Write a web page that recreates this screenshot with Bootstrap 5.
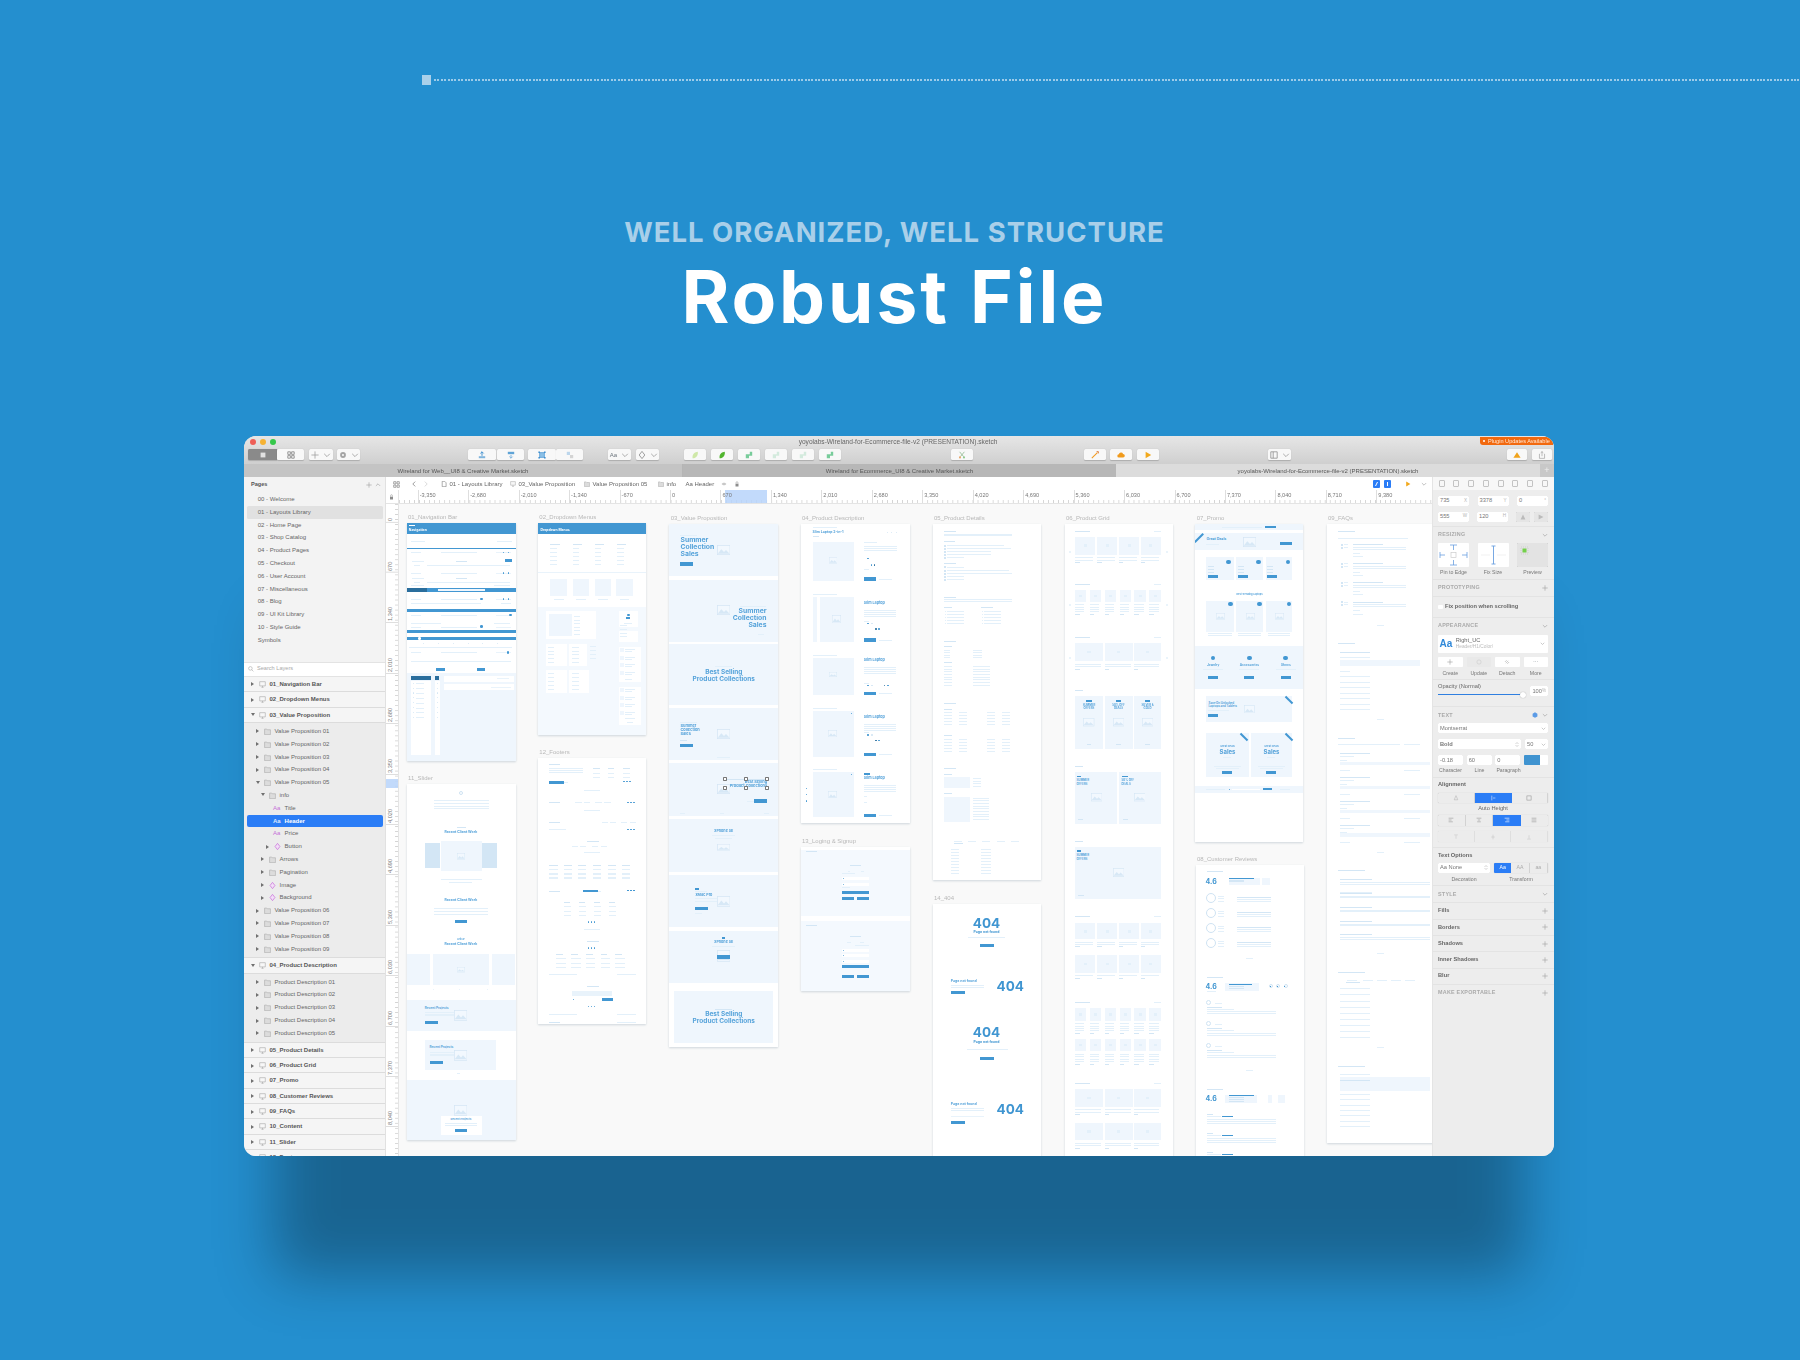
<!DOCTYPE html>
<html lang="en">
<head>
  <meta charset="UTF-8">
  <title>Robust File</title>
  <meta name="viewport" content="width=device-width, initial-scale=1">
  <link href="https://cdn.jsdelivr.net/npm/bootstrap@5.3.2/dist/css/bootstrap.min.css" rel="stylesheet">
  <style>
    body { background: #248fcf; width: 1800px; height: 1360px; overflow: hidden; font-family: "Liberation Sans", Arial, sans-serif; }

    /* hero */
    .hero-rule { margin-top: 75px; margin-left: 422px; height: 10px; }
    .hero-rule i { display: block; width: 9px; height: 10px; background: #a9d0ea; flex: none; }
    .hero-rule span { flex: 1; height: 2px; margin-left: 3px; background: repeating-linear-gradient(90deg, #9ccbe9 0 2px, transparent 2px 3.4px); }
    .hero-text { width: 1789px; text-align: center; font-family: Inter, "Open Sans", sans-serif; }
    .hero-sub { margin-top: 130px; height: 34px; line-height: 34px; font-size: 27.5px; font-weight: 700; color: #a9cfe9; letter-spacing: 1px; }
    .hero-title { margin-top: 3px; height: 90px; line-height: 90px; font-size: 73px; font-weight: 700; color: #fff; letter-spacing: 2.9px; }

    /* sketch window */
    .app-win { width: 1310px; height: 720px; margin: 94px 0 0 244px; border-radius: 12px; overflow: hidden; background: #ededed; box-shadow: 0 150px 55px -30px rgba(0, 0, 0, .3); color: #555; font-size: 6px; line-height: 1; }
    .app-win > * { filter: blur(.3px); }
    .app-head { height: 28px; background: linear-gradient(#e6e6e6, #cfcfcf); flex: none; }
    .title-row { height: 13px; font-size: 6.6px; color: #666; padding-right: 2px; }
    .lights i { display: block; width: 6px; height: 6px; border-radius: 50%; margin-right: 4.2px; }
    .lights { position: absolute; left: 6px; top: 3px; }
    .plugin-tag { position: absolute; right: 1px; top: 1px; width: 73px; height: 8px; background: #f2690f; color: #ffe9d8; font-size: 5.6px; line-height: 8px; border-radius: 0 6px 0 3px; padding-left: 8px; }
    .plugin-tag::before { content: ""; position: absolute; left: 3px; top: 3px; width: 2px; height: 2px; background: #fff; border-radius: 50%; }
    .tool-row { height: 11px; padding-left: 4px; }
    .tbtn { height: 11px; width: 22px; background: #f8f8f8; border-radius: 1.5px; box-shadow: 0 .5px 1px rgba(0,0,0,.18); flex: none; }
    .tbtn svg { width: 8px; height: 8px; }
    .w-dark { width: 29px; background: #8a8a8a; border-radius: 1.5px 0 0 1.5px; }
    .w27 { width: 27px; } .w28 { width: 28px; } .w24 { width: 24px; } .w23 { width: 23px; } .w20 { width: 20px; }
    .ml1 { margin-left: 1px; } .ml4 { margin-left: 4px; } .ml5 { margin-left: 5px; } .ml25 { margin-left: 25px; } .ml108 { margin-left: 108px; } .ml110 { margin-left: 110px; } .ml111 { margin-left: 111px; } .ml109 { margin-left: 109px; } .ml216 { margin-left: 216px; }
    .tab-row { height: 13px; flex: none; background: #c4c4c4; font-size: 6px; color: #555; }
    .tab-a { width: 439px; border-right: 1px solid #b5b5b5; }
    .tab-b { width: 433px; background: #b7b7b7; }
    .tab-c { width: 424px; background: #dcdcdc; }
    .tab-add { width: 14px; background: #c8c8c8; color: #eee; font-size: 9px; }

    /* layers */
    .side-pane { width: 141.5px; flex: none; background: #f3f3f3; border-right: 1px solid #e1e1e1; }
    .pages-head { height: 16px; padding: 0 4px 0 7px; font-weight: 700; color: #555; font-size: 5.6px; }
    .pages-head svg { width: 6px; height: 6px; margin-left: 3px; }
    .page-item { height: 12.8px; line-height: 12.8px; margin: 0 2px 0 3px; padding-left: 10.7px; color: #666; }
    .page-item.is-on { background: #e1e1e1; border-radius: 1.5px; }
    .pages-pad { height: 15px; }
    .layer-search { height: 15.4px; background: #fff; padding-left: 4px; border-top: 1px solid #e3e3e3; border-bottom: 1px solid #e3e3e3; color: #aaa; font-size: 5.6px; }
    .layer-search svg { width: 6px; height: 6px; margin-right: 3px; }
    .layer-group { height: 15.35px; background: #f5f5f5; border-bottom: 1px solid #dcdcdc; font-weight: 700; color: #555; position: relative; padding-left: 25.5px; line-height: 14.5px; }
    .layer-kids { background: #ececec; padding: 2px 0; border-bottom: 1px solid #dcdcdc; }
    .layer-row { height: 12.8px; position: relative; line-height: 12.8px; color: #666; }
    .layer-row.is-on { color: #fff; font-weight: 700; background: #2b7df6; margin: 0 2px 0 3px; border-radius: 2px; }
    .layer-row span, .layer-row svg, .layer-row b, .layer-group svg, .layer-group b { position: absolute; }
    .arr-r { width: 0; height: 0; border-left: 3px solid #707070; border-top: 2px solid transparent; border-bottom: 2px solid transparent; }
    .arr-d { width: 0; height: 0; border-top: 3px solid #707070; border-left: 2px solid transparent; border-right: 2px solid transparent; }
    .lay-ico { width: 7px; height: 7px; }

    /* middle */
    .mid-pane { width: 1046px; min-width: 0; }
    .crumb-row { height: 13px; background: #fff; flex: none; color: #666; position: relative; }
    .crumb-row span, .crumb-row svg { position: absolute; top: 3.5px; }
    .crumb-row svg { width: 6px; height: 6px; }
    .ruler-row { height: 14px; flex: none; background: #fff; }
    .ruler-lock { width: 13px; flex: none; background: #fff; border-right: 1px solid #e4e4e4; border-bottom: 1px solid #e4e4e4; }
    .ruler-lock svg { width: 5px; height: 6px; }
    .ruler-h { flex: 1; position: relative; overflow: hidden; border-bottom: 1px solid #e4e4e4; background: linear-gradient(90deg, #d3d3d3 1px, transparent 1px) 0 100% / 5.045px 3px repeat-x #fff; }
    .ruler-v { width: 13px; flex: none; position: relative; overflow: hidden; border-right: 1px solid #e4e4e4; background: linear-gradient(#d3d3d3 1px, transparent 1px) 100% 0 / 3px 5.04px repeat-y #fff; }
    .ruler-h em { position: absolute; top: 0; height: 14px; border-left: 1px solid #dedede; padding: 3px 0 0 1px; font-style: normal; color: #777; font-size: 5.6px; }
    .ruler-v em { position: absolute; left: 0; width: 12px; border-bottom: 1px solid #dedede; font-style: normal; color: #777; font-size: 5.6px; transform: translateY(-100%); }
    .ruler-v em b { display: block; font-weight: 400; writing-mode: vertical-rl; transform: rotate(180deg); margin-left: 2px; padding-top: 1px; }
    .ruler-mark-h { position: absolute; left: 326px; top: 0; width: 42px; height: 14px; background: #b7d3fa; opacity: .85; }
    .ruler-mark-v { position: absolute; left: 0; top: 275px; width: 12px; height: 9px; background: #b7d3fa; opacity: .85; }
    .sk-canvas { position: relative; flex: 1; overflow: hidden; background: #f9f9f9; }

    /* wireframe boards */
    .wf-label { position: absolute; color: #b8b8b8; font-size: 6px; white-space: nowrap; }
    .wf-board { position: absolute; background: #fff; box-shadow: 0 .5px 2px rgba(60, 90, 120, .22); overflow: hidden; }
    .wf-board > * { position: absolute; }
    .wf-pale { background: #eff6fd; }
    .wf-pale2 { background: #f4f9fe; }
    .wf-mid { background: #d3e6f5; }
    .wf-line { background: #e3f0fa; }
    .wf-soft { background: #e9f3fb; }
    .wf-blue { background: #4297d2; }
    .wf-dark { background: #2a6e9d; }
    .wf-white { background: #fff; }
    .wf-round { border-radius: 50%; }
    .wf-ring { border-radius: 50%; border: .7px solid #cfe3f3; }
    .wf-grip { background: #fff; border: .5px solid #777; border-radius: .7px; }
    .wf-txt { color: #56a3da; font-family: Inter, "Open Sans", sans-serif; font-weight: 700; line-height: 1; white-space: nowrap; }
    .wf-ink { color: #3f95d1; }
    .wf-w { color: #fff; }

    /* inspector */
    .insp-pane { width: 122.5px; flex: none; background: #ededed; border-left: 1px solid #e4e4e4; color: #666; font-size: 5.7px; }
    .insp-top { height: 13px; background: #f7f7f7; padding: 0 6px; }
    .insp-top i { display: block; width: 6px; height: 7px; border: .6px solid #c3c3c3; border-radius: 1px; }
    .insp-sec { padding: 0 6px 0 5.5px; border-bottom: 1px solid #e3e3e3; }
    .insp-head { height: 16px; color: #aaa; font-size: 5.4px; font-weight: 700; letter-spacing: .25px; }
    .insp-head svg, .insp-fill svg { width: 6px; height: 6px; }
    .insp-fill { height: 16.3px; font-weight: 700; color: #666; border-bottom: 1px solid #e3e3e3; padding: 0 6px 0 5.5px; }
    .fld { height: 10px; background: #fff; border-radius: 1px; padding: 0 2px; box-shadow: 0 0 .5px rgba(0,0,0,.25); color: #777; }
    .fld u { text-decoration: none; color: #b5b5b5; font-size: 4.6px; }
    .w31 { width: 31px; } .w25 { width: 25px; } .gap-8 { gap: 9px; } .gap-4 { gap: 4px; }
    .pos-rows { padding-top: 6px; height: 37px; }
    .pos-rows > div + div { margin-top: 5.7px; }
    .mini-btn { width: 14px; height: 10px; background: #e5e5e5; border-radius: 1px; box-shadow: 0 0 .5px rgba(0,0,0,.3); }
    .mini-btn svg { width: 6px; height: 6px; }
    .res-box { width: 31px; height: 24px; background: #fff; border-radius: 1px; }
    .res-box.is-prev { background: #e3e3e3; box-shadow: inset 0 0 .5px rgba(0,0,0,.4); }
    .res-box svg { width: 100%; height: 100%; display: block; }
    .cap-row { height: 10px; color: #777; font-size: 5.2px; text-align: center; }
    .fix-row { height: 20px; color: #666; font-weight: 700; }
    .fix-row i { display: block; width: 4.5px; height: 4.5px; background: #fff; margin-right: 2.5px; border-radius: 1px; }
    .style-box { height: 18.6px; background: #fff; padding: 0 3px 0 1.5px; border-radius: 1px; margin-top: .5px; }
    .style-aa { font-size: 10px; font-weight: 700; color: #2f88d9; margin-right: 3.5px; }
    .style-box p { margin: 0; line-height: 1.25; color: #666; }
    .style-box p + p { color: #bbb; font-size: 4.8px; }
    .act-btn { width: 25px; height: 10px; background: #fff; border-radius: 1px; margin-right: 4px; }
    .act-btn:last-child { margin-right: 0; }
    .act-btn svg { width: 6px; height: 6px; }
    .op-sec { height: 27px; padding-top: 4px; }
    .op-bar { height: 1px; width: 86px; margin-top: 2px; background: #2f7fe0; position: relative; }
    .op-bar i { position: absolute; right: -2px; top: -2.5px; width: 6px; height: 6px; border-radius: 50%; background: #fff; box-shadow: 0 0 1px rgba(0,0,0,.4); }
    .op-pct { width: 18px; height: 10px; margin-top: 2px; }
    .txt-rows > div { margin-bottom: 6px; }
    .color-well { width: 24px; height: 10px; border-radius: 1px; overflow: hidden; }
    .color-well i { display: block; width: 16px; background: #3f93d0; }
    .color-well b { display: block; flex: 1; background: #fff; }
    .lbl-strong { font-weight: 700; color: #666; height: 15px; }
    .seg-bar { height: 10.6px; background: #ececec; box-shadow: 0 0 .7px rgba(0,0,0,.4); border-radius: 1px; overflow: hidden; }
    .seg-bar > div { flex: 1; height: 100%; border-right: .5px solid #d2d2d2; }
    .seg-bar > div.on { background: #2b7df6; border: 0; }
    .seg-bar svg { width: 6px; height: 6px; }
    .seg-3a > div:nth-child(2) { flex: 0 0 37px; }
    .seg-4a > div { flex: 0 0 27.7px; }
    .seg-off { opacity: .55; }
    .aa-tab { font-size: 5.2px; color: #aaa; }
    .aa-tab.on { color: #fff; }
    .cap-line { height: 12px; }
  </style>
</head>
<body>

  <svg width="0" height="0" class="position-absolute">
    <symbol id="i-chev" viewBox="0 0 10 10"><path d="M1.5 3.5 5 7l3.5-3.5" fill="none" stroke="#a8a8a8" stroke-width="1.2"/></symbol>
    <symbol id="i-plus" viewBox="0 0 10 10"><path d="M5 .5v9M.5 5h9" fill="none" stroke="#a0a0a0" stroke-width="1"/></symbol>
    <symbol id="i-folder" viewBox="0 0 10 10"><path d="M.8 1.5h3l1 1h4.4v7H.8z" fill="#dcdcdc" stroke="#a9a9a9" stroke-width=".8"/></symbol>
    <symbol id="i-monitor" viewBox="0 0 10 10"><path d="M1 1h8v6H1zM3.5 9h3M5 7v2" fill="#f7f7f7" stroke="#a0a0a0" stroke-width=".8"/></symbol>
    <symbol id="i-diamond" viewBox="0 0 10 10"><path d="M5 .5 8.5 5 5 9.5 1.5 5z" fill="#f3def8" stroke="#c56fd8" stroke-width="1"/></symbol>
    <symbol id="i-grid" viewBox="0 0 10 10"><path d="M1 1h3.2v3.2H1zM5.8 1H9v3.2H5.8zM1 5.8h3.2V9H1zM5.8 5.8H9V9H5.8z" fill="none" stroke="#777" stroke-width=".9"/></symbol>
    <symbol id="i-lock" viewBox="0 0 10 12"><path d="M2 5.5h6v5.5H2z" fill="#8c8c8c"/><path d="M3.2 5.5V3.2a1.8 1.8 0 0 1 3.6 0v2.3" fill="none" stroke="#8c8c8c" stroke-width="1"/></symbol>
    <symbol id="i-tray" viewBox="0 0 10 10"><path d="M5 1v5M3 3l2-2 2 2" fill="none" stroke="#3f8fcf" stroke-width="1.2"/><path d="M1 6.5h8V9H1z" fill="#7fb4dc"/></symbol>
    <symbol id="i-tray2" viewBox="0 0 10 10"><path d="M1 1h8v3H1z" fill="#5fa3d6"/><path d="M5 9V5M3 7l2 2 2-2" fill="none" stroke="#7fb4dc" stroke-width="1.2"/></symbol>
    <symbol id="i-group" viewBox="0 0 10 10"><path d="M2 2h6v6H2z" fill="#8cc0e6" stroke="#3f8fcf" stroke-width=".8"/><path d="M.5.5h2v2h-2zM7.5.5h2v2h-2zM.5 7.5h2v2h-2zM7.5 7.5h2v2h-2z" fill="#3f8fcf"/></symbol>
    <symbol id="i-ungroup" viewBox="0 0 10 10"><path d="M1 1h4v4H1z" fill="#bcd6ec"/><path d="M5 5h4v4H5z" fill="#d4d4d4"/></symbol>
    <symbol id="i-leaf" viewBox="0 0 10 10"><path d="M2 9C1 4 5 1 8.500.8 9 5 7 9 2 9z" fill="#52b52f"/></symbol>
    <symbol id="i-leaf2" viewBox="0 0 10 10"><path d="M2 9C1 4 5 1 8.500.8 9 5 7 9 2 9z" fill="#cfe8a8"/></symbol>
    <symbol id="i-union" viewBox="0 0 10 10"><path d="M1 4h5V1h3v5H5v3H1z" fill="#78cc9a"/></symbol>
    <symbol id="i-union2" viewBox="0 0 10 10"><path d="M1 4h5V1h3v5H5v3H1z" fill="#d3eadd"/></symbol>
    <symbol id="i-pen" viewBox="0 0 10 10"><path d="M1 9 8 2" stroke="#f29a1f" stroke-width="1.3" fill="none"/><path d="M7 .8h2.200V3" fill="none" stroke="#d8641c"/></symbol>
    <symbol id="i-cloud" viewBox="0 0 10 10"><path d="M2.500 8A2 2 0 0 1 2.300 4 2.800 2.800 0 0 1 7.600 3.600 2.200 2.200 0 0 1 7.500 8z" fill="#f09a1c"/></symbol>
    <symbol id="i-play" viewBox="0 0 10 10"><path d="M2 1l7 4-7 4z" fill="#f2a91d"/></symbol>
    <symbol id="i-warn" viewBox="0 0 10 10"><path d="M5 1.500 9.500 8.500H.5z" fill="#f0a31c"/></symbol>
    <symbol id="i-share" viewBox="0 0 10 10"><path d="M2.500 4H1.800v5.200h6.400V4H7.500M5 6.500V.8M3.400 2.200 5 .8l1.600 1.400" fill="none" stroke="#9a9a9a" stroke-width=".8"/></symbol>
    <symbol id="i-layout" viewBox="0 0 10 10"><path d="M1 1h8v8H1zM4 1v8" fill="none" stroke="#8f8f8f" stroke-width="1"/></symbol>
    <symbol id="i-gear" viewBox="0 0 10 10"><circle cx="5" cy="5" r="3.600" fill="#a4a4a4"/><circle cx="5" cy="5" r="1.300" fill="#f7f7f7"/></symbol>
    <symbol id="i-scissor" viewBox="0 0 10 10"><path d="M2 1l5 6M8 1 3 7" stroke="#8fb98f" stroke-width="1" fill="none"/><circle cx="2.500" cy="8" r="1.300" fill="#e7a66a"/><circle cx="7.500" cy="8" r="1.300" fill="#8fca8f"/></symbol>
  </svg>

  <div class="hero-rule d-flex align-items-center"><i></i><span></span></div>

  <div class="hero-text">
    <div class="hero-sub">WELL ORGANIZED, WELL STRUCTURE</div>
    <div class="hero-title">Robust File</div>
  </div>

  <div class="app-win d-flex flex-column">
    <div class="app-head position-relative">
      <div class="lights d-flex"><i style="background:#ee5f57"></i><i style="background:#f6b233"></i><i style="background:#35c84a"></i></div>
      <div class="title-row d-flex align-items-center justify-content-center">yoyolabs-Wireland-for-Ecommerce-file-v2 (PRESENTATION).sketch</div>
      <div class="plugin-tag">Plugin Updates Available</div>
      <div class="tool-row d-flex align-items-center">
        <div class="tbtn w-dark d-flex align-items-center justify-content-center"><svg viewBox="0 0 10 10"><path d="M2 2h6v6H2z" fill="#e2e2e2"/></svg></div>
        <div class="tbtn w27 d-flex align-items-center justify-content-center"><svg><use href="#i-grid"/></svg></div>
        <div class="tbtn w24 ml5 d-flex align-items-center justify-content-center gap-1"><svg><use href="#i-plus"/></svg><svg class="chev-s"><use href="#i-chev"/></svg></div>
        <div class="tbtn w23 ml4 d-flex align-items-center justify-content-center gap-1"><svg><use href="#i-gear"/></svg><svg><use href="#i-chev"/></svg></div>
        <div class="tbtn w28 ml108 d-flex align-items-center justify-content-center"><svg><use href="#i-tray"/></svg></div>
        <div class="tbtn w27 ml1 d-flex align-items-center justify-content-center"><svg><use href="#i-tray2"/></svg></div>
        <div class="tbtn w28 ml4 d-flex align-items-center justify-content-center"><svg><use href="#i-group"/></svg></div>
        <div class="tbtn w27 d-flex align-items-center justify-content-center"><svg><use href="#i-ungroup"/></svg></div>
        <div class="tbtn w23 ml25 d-flex align-items-center justify-content-center gap-1 text-secondary">Aa<svg><use href="#i-chev"/></svg></div>
        <div class="tbtn w23 ml5 d-flex align-items-center justify-content-center gap-1"><svg viewBox="0 0 10 10"><path d="M5 .5 8.500 5 5 9.500 1.500 5z" fill="none" stroke="#888"/></svg><svg><use href="#i-chev"/></svg></div>
        <div class="tbtn ml25 d-flex align-items-center justify-content-center"><svg><use href="#i-leaf2"/></svg></div>
        <div class="tbtn ml5 d-flex align-items-center justify-content-center"><svg><use href="#i-leaf"/></svg></div>
        <div class="tbtn ml5 d-flex align-items-center justify-content-center"><svg><use href="#i-union"/></svg></div>
        <div class="tbtn ml5 d-flex align-items-center justify-content-center"><svg><use href="#i-union2"/></svg></div>
        <div class="tbtn ml5 d-flex align-items-center justify-content-center"><svg><use href="#i-union2"/></svg></div>
        <div class="tbtn ml5 d-flex align-items-center justify-content-center"><svg><use href="#i-union"/></svg></div>
        <div class="tbtn ml110 d-flex align-items-center justify-content-center"><svg><use href="#i-scissor"/></svg></div>
        <div class="tbtn ml111 d-flex align-items-center justify-content-center"><svg><use href="#i-pen"/></svg></div>
        <div class="tbtn ml4 d-flex align-items-center justify-content-center"><svg><use href="#i-cloud"/></svg></div>
        <div class="tbtn ml5 d-flex align-items-center justify-content-center"><svg><use href="#i-play"/></svg></div>
        <div class="tbtn w23 ml109 d-flex align-items-center justify-content-center gap-1"><svg><use href="#i-layout"/></svg><svg><use href="#i-chev"/></svg></div>
        <div class="tbtn w20 ml216 d-flex align-items-center justify-content-center"><svg><use href="#i-warn"/></svg></div>
        <div class="tbtn w20 ml5 d-flex align-items-center justify-content-center"><svg><use href="#i-share"/></svg></div>
      </div>
    </div>

    <div class="tab-row d-flex align-items-center">
      <div class="tab-a h-100 d-flex align-items-center justify-content-center">Wireland for Web__UI8 &amp; Creative Market.sketch</div>
      <div class="tab-b h-100 d-flex align-items-center justify-content-center">Wireland for Ecommerce_UI8 &amp; Creative Market.sketch</div>
      <div class="tab-c h-100 d-flex align-items-center justify-content-center">yoyolabs-Wireland-for-Ecommerce-file-v2 (PRESENTATION).sketch</div>
      <div class="tab-add h-100 d-flex align-items-center justify-content-center">+</div>
    </div>

    <div class="d-flex flex-grow-1 overflow-hidden">
      <!-- pages + layers -->
      <div class="side-pane overflow-hidden">
        <div class="pages-head d-flex align-items-center justify-content-between">Pages<span class="d-flex"><svg><use href="#i-plus"/></svg><svg style="transform:scaleY(-1)"><use href="#i-chev"/></svg></span></div>
        <div id="page-list"></div>
        <div class="pages-pad"></div>
        <div class="layer-search d-flex align-items-center"><svg viewBox="0 0 10 10"><circle cx="4" cy="4" r="3" fill="none" stroke="#aaa"/><path d="M6 6l3 3" stroke="#aaa"/></svg>Search Layers</div>
        <div id="layer-list"></div>
      </div>

      <!-- breadcrumb, rulers, canvas -->
      <div class="mid-pane d-flex flex-column">
        <div class="crumb-row">
          <svg style="left:7px;width:7px;height:7px"><use href="#i-grid"/></svg>
          <svg style="left:25px" viewBox="0 0 10 10"><path d="M7 1 3 5l4 4" fill="none" stroke="#777" stroke-width="1.200"/></svg>
          <svg style="left:37px" viewBox="0 0 10 10"><path d="M3 1l4 4-4 4" fill="none" stroke="#ccc" stroke-width="1.200"/></svg>
          <svg style="left:55px" viewBox="0 0 10 10"><path d="M2 .5h4L8.500 3v6.500H2z" fill="#fff" stroke="#777"/></svg><span style="left:64px">01 - Layouts Library</span>
          <svg style="left:124px"><use href="#i-monitor"/></svg><span style="left:133px">03_Value Proposition</span>
          <svg style="left:198px"><use href="#i-folder"/></svg><span style="left:207px">Value Proposition 05</span>
          <svg style="left:272px"><use href="#i-folder"/></svg><span style="left:281px">info</span>
          <span style="left:300px;color:#666">Aa</span><span style="left:309px">Header</span>
          <svg style="left:335px" viewBox="0 0 10 10"><path d="M1 5c2-3 6-3 8 0-2 3-6 3-8 0z" fill="#c8c8c8"/></svg>
          <svg style="left:348px"><use href="#i-lock"/></svg>
          <svg style="left:987px;width:7px;height:8px;top:2.500px" viewBox="0 0 7 8"><rect width="7" height="8" rx="1" fill="#2b7df6"/><path d="M2.500 6 4.500 2" stroke="#fff"/></svg>
          <svg style="left:998px;width:7px;height:8px;top:2.500px" viewBox="0 0 7 8"><rect width="7" height="8" rx="1" fill="#2b7df6"/><path d="M3.500 2v4" stroke="#fff"/></svg>
          <svg style="left:1019px"><use href="#i-play"/></svg>
          <svg style="left:1035px"><use href="#i-chev"/></svg>
        </div>
        <div class="ruler-row d-flex">
          <div class="ruler-lock d-flex align-items-center justify-content-center"><svg viewBox="0 0 10 12"><use href="#i-lock"/></svg></div>
          <div class="ruler-h" id="ruler-h"><div class="ruler-mark-h"></div></div>
        </div>
        <div class="d-flex flex-grow-1 overflow-hidden">
          <div class="ruler-v" id="ruler-v"><div class="ruler-mark-v"></div></div>
          <div class="sk-canvas" id="sk-canvas"></div>
        </div>
      </div>

      <!-- inspector -->
      <div class="insp-pane d-flex flex-column">
        <div class="insp-top d-flex align-items-center justify-content-between"><i></i><i></i><i></i><i></i><i></i><i></i><i></i><i></i></div>

        <div class="insp-sec pos-rows">
          <div class="d-flex justify-content-between">
            <div class="fld w31 d-flex align-items-center justify-content-between">735<u>X</u></div>
            <div class="fld w31 d-flex align-items-center justify-content-between">3378<u>Y</u></div>
            <div class="fld w31 d-flex align-items-center justify-content-between">0<u>°</u></div>
          </div>
          <div class="d-flex justify-content-between">
            <div class="fld w31 d-flex align-items-center justify-content-between">555<u>W</u></div>
            <div class="fld w31 d-flex align-items-center justify-content-between">120<u>H</u></div>
            <div class="d-flex gap-1">
              <div class="mini-btn d-flex align-items-center justify-content-center"><svg viewBox="0 0 10 10"><path d="M5 1 9 9H1z" fill="#bbb"/></svg></div>
              <div class="mini-btn d-flex align-items-center justify-content-center"><svg viewBox="0 0 10 10"><path d="M1 1l8 4-8 4z" fill="#bbb"/></svg></div>
            </div>
          </div>
        </div>

        <div class="insp-sec">
          <div class="insp-head d-flex align-items-center justify-content-between">RESIZING<svg><use href="#i-chev"/></svg></div>
          <div class="d-flex justify-content-between">
            <div class="res-box"><svg viewBox="0 0 31 24"><path d="M15.500 2v5M12 2h7M15.500 22v-5M12 22h7M2 12h5M2 9v6M29 12h-5M29 9v6" fill="none" stroke="#6a9fe0" stroke-width=".8"/><rect x="13" y="9.500" width="5" height="5" fill="none" stroke="#ccc" stroke-width=".7"/></svg></div>
            <div class="res-box"><svg viewBox="0 0 31 24"><path d="M15.500 3v18M13.500 3h4M13.500 21h4" fill="none" stroke="#6a9fe0" stroke-width=".9"/><path d="M3 12h9M19 12h9" stroke="#e8e8e8" stroke-width=".6"/></svg></div>
            <div class="res-box is-prev"><svg viewBox="0 0 31 24"><rect x="4" y="4" width="7" height="7" fill="none" stroke="#bbb" stroke-width=".5" stroke-dasharray="1"/><rect x="5.500" y="5.500" width="4" height="4" fill="#74d04b"/></svg></div>
          </div>
          <div class="cap-row d-flex justify-content-between align-items-center" style="height:12px"><span class="w31">Pin to Edge</span><span class="w31">Fix Size</span><span class="w31">Preview</span></div>
        </div>

        <div class="insp-sec"><div class="insp-head d-flex align-items-center justify-content-between">PROTOTYPING<svg><use href="#i-plus"/></svg></div></div>
        <div class="insp-sec"><div class="fix-row d-flex align-items-center"><i></i>Fix position when scrolling</div></div>

        <div class="insp-sec">
          <div class="insp-head d-flex align-items-center justify-content-between">APPEARANCE<svg><use href="#i-chev"/></svg></div>
          <div class="style-box d-flex align-items-center">
            <span class="style-aa">Aa</span>
            <div class="flex-grow-1"><p>Right_UC</p><p>Header/H1/Color/</p></div>
            <svg width="5" height="5"><use href="#i-chev"/></svg>
          </div>
          <div class="d-flex mt-1 justify-content-between">
            <div class="act-btn d-flex align-items-center justify-content-center"><svg><use href="#i-plus"/></svg></div>
            <div class="act-btn d-flex align-items-center justify-content-center" style="background:#e9e9e9"><svg viewBox="0 0 10 10"><circle cx="5" cy="5" r="3.500" fill="none" stroke="#ccc"/></svg></div>
            <div class="act-btn d-flex align-items-center justify-content-center"><svg viewBox="0 0 10 10"><path d="M3 7l4-4M1.500 5l3-3M5.500 8l3-3" fill="none" stroke="#aaa"/></svg></div>
            <div class="act-btn d-flex align-items-center justify-content-center text-secondary">···</div>
          </div>
          <div class="cap-row d-flex align-items-center" style="height:12.300px"><span class="w25 me-1">Create</span><span class="w25 me-1">Update</span><span class="w25 me-1">Detach</span><span class="w25">More</span></div>
        </div>

        <div class="insp-sec op-sec d-flex justify-content-between">
          <div><div style="height:8px">Opacity (Normal)</div><div class="op-bar"><i></i></div></div>
          <div class="fld op-pct d-flex align-items-center justify-content-end">100<u>%</u></div>
        </div>

        <div class="insp-sec">
          <div class="insp-head d-flex align-items-center justify-content-between">TEXT<span class="d-flex gap-1"><svg viewBox="0 0 10 10"><path d="M5 .5 9 3v4.500L5 9.500 1 7.500V3z" fill="#5b9be6"/></svg><svg><use href="#i-chev"/></svg></span></div>
          <div class="txt-rows">
            <div class="fld d-flex align-items-center justify-content-between">Montserrat<svg width="5" height="5"><use href="#i-chev"/></svg></div>
            <div class="d-flex justify-content-between">
              <div class="fld d-flex align-items-center justify-content-between fw-bold" style="width:83px">Bold<svg width="4" height="5" viewBox="0 0 4 5"><path d="M.5 2 2 .5 3.500 2M.5 3 2 4.500 3.500 3" fill="none" stroke="#aaa" stroke-width=".5"/></svg></div>
              <div class="fld w23 d-flex align-items-center justify-content-between">50<svg width="5" height="5"><use href="#i-chev"/></svg></div>
            </div>
            <div class="d-flex justify-content-between mb-0">
              <div class="fld w25 d-flex align-items-center">-0.18</div>
              <div class="fld w25 d-flex align-items-center">60</div>
              <div class="fld w25 d-flex align-items-center">0</div>
              <div class="color-well d-flex"><i></i><b></b></div>
            </div>
          </div>
          <div class="cap-row d-flex align-items-center" style="height:11.200px"><span class="w25 me-1">Character</span><span class="w25 me-1">Line</span><span class="w25">Paragraph</span></div>
        </div>

        <div class="insp-sec">
          <div class="lbl-strong d-flex align-items-center">Alignment</div>
          <div class="seg-bar seg-3a d-flex">
            <div class="d-flex align-items-center justify-content-center"><svg viewBox="0 0 10 10"><path d="M5 1 2 8h6z" fill="none" stroke="#aaa" stroke-width=".8"/></svg></div>
            <div class="on d-flex align-items-center justify-content-center"><svg viewBox="0 0 10 10"><path d="M3 1v8M5 5h4" stroke="#dfeaff"/></svg></div>
            <div class="d-flex align-items-center justify-content-center"><svg viewBox="0 0 10 10"><rect x="1.500" y="1.500" width="7" height="7" fill="none" stroke="#999"/></svg></div>
          </div>
          <div class="cap-line d-flex align-items-center justify-content-center">Auto Height</div>
          <div class="seg-bar seg-4a d-flex">
            <div class="d-flex align-items-center justify-content-center"><svg viewBox="0 0 10 10"><path d="M1 2h8M1 5h5M1 8h7" stroke="#999"/></svg></div>
            <div class="d-flex align-items-center justify-content-center"><svg viewBox="0 0 10 10"><path d="M1 2h8M3 5h4M2 8h6" stroke="#999"/></svg></div>
            <div class="on d-flex align-items-center justify-content-center"><svg viewBox="0 0 10 10"><path d="M1 2h8M4 5h5M2 8h7" stroke="#fff"/></svg></div>
            <div class="d-flex align-items-center justify-content-center"><svg viewBox="0 0 10 10"><path d="M1 2h8M1 5h8M1 8h8" stroke="#999"/></svg></div>
          </div>
          <div class="seg-bar seg-off d-flex mt-1" style="margin-top:5.600px!important">
            <div class="d-flex align-items-center justify-content-center"><svg viewBox="0 0 10 10"><path d="M5 2v6M2 1.500h6" stroke="#aaa"/></svg></div>
            <div class="d-flex align-items-center justify-content-center"><svg viewBox="0 0 10 10"><path d="M5 1v8M2 5h6" stroke="#aaa"/></svg></div>
            <div class="d-flex align-items-center justify-content-center"><svg viewBox="0 0 10 10"><path d="M5 2v6M2 8.500h6" stroke="#aaa"/></svg></div>
          </div>
          <div style="height:5px"></div>
        </div>

        <div class="insp-sec">
          <div class="lbl-strong d-flex align-items-center">Text Options</div>
          <div class="d-flex justify-content-between">
            <div class="fld d-flex align-items-center justify-content-between" style="width:52px">Aa None<svg width="4" height="5" viewBox="0 0 4 5"><path d="M.5 2 2 .5 3.500 2M.5 3 2 4.500 3.500 3" fill="none" stroke="#aaa" stroke-width=".5"/></svg></div>
            <div class="seg-bar d-flex" style="width:54px;height:10px">
              <div class="on d-flex align-items-center justify-content-center aa-tab">Aa</div>
              <div class="d-flex align-items-center justify-content-center aa-tab">AA</div>
              <div class="d-flex align-items-center justify-content-center aa-tab">aa</div>
            </div>
          </div>
          <div class="cap-row d-flex justify-content-between align-items-center" style="height:12.500px"><span style="width:52px">Decoration</span><span style="width:54px">Transform</span></div>
        </div>

        <div class="insp-sec"><div class="insp-head d-flex align-items-center justify-content-between">STYLE<svg><use href="#i-chev"/></svg></div></div>
        <div class="insp-fill d-flex align-items-center justify-content-between">Fills<svg><use href="#i-plus"/></svg></div>
        <div class="insp-fill d-flex align-items-center justify-content-between">Borders<svg><use href="#i-plus"/></svg></div>
        <div class="insp-fill d-flex align-items-center justify-content-between">Shadows<svg><use href="#i-plus"/></svg></div>
        <div class="insp-fill d-flex align-items-center justify-content-between">Inner Shadows<svg><use href="#i-plus"/></svg></div>
        <div class="insp-fill d-flex align-items-center justify-content-between">Blur<svg><use href="#i-plus"/></svg></div>
        <div class="insp-head d-flex align-items-center justify-content-between" style="padding:0 6px 0 5.500px">MAKE EXPORTABLE<svg><use href="#i-plus"/></svg></div>
      </div>
    </div>
  </div>

  <script src="https://cdn.jsdelivr.net/npm/bootstrap@5.3.2/dist/js/bootstrap.bundle.min.js"></script>
  <script>
    // ---- sidebar ----
    const pages = ["00 - Welcome", "01 - Layouts Library", "02 - Home Page", "03 - Shop Catalog", "04 - Product Pages", "05 - Checkout",
      "06 - User Account", "07 - Miscellaneous", "08 - Blog", "09 - UI Kit Library", "10 - Style Guide", "Symbols"];
    document.getElementById("page-list").innerHTML = pages
      .map((p, i) => `<div class="page-item${i === 1 ? " is-on" : ""}">${p}</div>`).join("");

    // [arrow x, arrow down?, icon x, icon, text x, name]
    const vp = n => [11.500, false, 19.500, "folder", 30.500, "Value Proposition " + n];
    const pd = n => [11.500, false, 19.500, "folder", 30.500, "Product Description " + n];
    const layers = [
      { name: "01_Navigation Bar" }, { name: "02_Dropdown Menus" },
      { name: "03_Value Proposition", open: true, kids: [vp("01"), vp("02"), vp("03"), vp("04"),
        [11.500, true, 19.500, "folder", 30.500, "Value Proposition 05"],
        [16.500, true, 24.500, "folder", 35.500, "info"],
        [0, false, 29, "aa", 40.600, "Title"],
        [0, false, 29, "aa", 40.600, "Header", true],
        [0, false, 29, "aa", 40.600, "Price"],
        [21.500, false, 29.500, "diamond", 40.600, "Button"],
        [16.500, false, 24.500, "folder", 35.500, "Arrows"],
        [16.500, false, 24.500, "folder", 35.500, "Pagination"],
        [16.500, false, 24.500, "diamond", 35.500, "Image"],
        [16.500, false, 24.500, "diamond", 35.500, "Background"],
        vp("06"), vp("07"), vp("08"), vp("09")] },
      { name: "04_Product Description", open: true, kids: [pd("01"), pd("02"), pd("03"), pd("04"), pd("05")] },
      { name: "05_Product Details" }, { name: "06_Product Grid" }, { name: "07_Promo" }, { name: "08_Customer Reviews" },
      { name: "09_FAQs" }, { name: "10_Content" }, { name: "11_Slider" }, { name: "12_Footers" }
    ];
    const kidRow = ([ax, down, ix, ico, tx, name, on]) => {
      const shift = on ? 3 : 0;
      const arrow = ax ? `<b class="${down ? "arr-d" : "arr-r"}" style="left:${ax}px;top:4.500px"></b>` : "";
      const icon = ico === "aa"
        ? `<span style="left:${ix - shift}px;color:${on ? "#dbe8ff" : "#c56fd8"}">Aa</span>`
        : `<svg class="lay-ico" style="left:${ix}px;top:3px"><use href="#i-${ico}"/></svg>`;
      return `<div class="layer-row${on ? " is-on" : ""}">${arrow}${icon}<span style="left:${tx - shift}px">${name}</span></div>`;
    };
    document.getElementById("layer-list").innerHTML = layers.map(g => {
      const arrow = `<b class="${g.open ? "arr-d" : "arr-r"}" style="left:6.500px;top:5.500px"></b>`;
      const head = `<div class="layer-group">${arrow}<svg class="lay-ico" style="left:14.500px;top:4px"><use href="#i-monitor"/></svg>${g.name}</div>`;
      return head + (g.kids ? `<div class="layer-kids">${g.kids.map(kidRow).join("")}</div>` : "");
    }).join("");

    // ---- rulers ----
    const rh = document.getElementById("ruler-h");
    for (let i = -5; i <= 14; i++) {
      const e = document.createElement("em");
      e.style.left = (669.500 - 398 + i * 50.450) + "px";
      e.textContent = (i * 670).toLocaleString("en-US");
      rh.appendChild(e);
    }
    const rv = document.getElementById("ruler-v");
    for (let i = 0; i <= 12; i++) {
      const e = document.createElement("em");
      e.style.top = (522.500 - 504 + i * 50.400) + "px";
      e.innerHTML = "<b>" + (i * 670).toLocaleString("en-US") + "</b>";
      rv.appendChild(e);
    }

    // ---- canvas: wireframe artboards ----
    const canvas = document.getElementById("sk-canvas");
    const CX = 398, CY = 504;
    let board, bx, by, ox = 400, oy = 500;

    // small stuff is written in 3x coords (real px = origin + z / 3), it's too tiny otherwise
    const at = (x, y) => { ox = x; oy = y; };
    const X = z => ox + z / 3 - bx;
    const Y = z => oy + z / 3 - by;

    function addBoard(label, x1, y1, x2, y2) {
      bx = x1; by = y1;
      const l = document.createElement("div");
      l.className = "wf-label";
      l.style.left = (x1 + 1.500 - CX) + "px";
      l.style.top = (y1 - 9 - CY) + "px";
      l.textContent = label;
      canvas.appendChild(l);
      board = document.createElement("div");
      board.className = "wf-board";
      board.style.cssText = `left:${x1 - CX}px;top:${y1 - CY}px;width:${x2 - x1}px;height:${y2 - y1}px`;
      canvas.appendChild(board);
    }
    function box(x1, y1, x2, y2, cls = "wf-pale") {
      const e = document.createElement("div");
      e.className = cls;
      e.style.cssText = `left:${X(x1)}px;top:${Y(y1)}px;width:${(x2 - x1) / 3}px;height:${(y2 - y1) / 3}px`;
      board.appendChild(e);
      return e;
    }
    const ln = (x1, y, x2, cls = "wf-line") => box(x1, y, x2, y + 3, cls);
    function lines(x1, y, x2, n, step, cls) { for (let i = 0; i < n; i++) ln(x1, y + i * step, x2, cls); }
    const btn = (x1, y1, x2, y2) => box(x1, y1, x2, y2, "wf-blue");
    const dot = (x, y, r = 4, cls = "wf-blue wf-round") => box(x - r, y - r, x + r, y + r, cls);
    function txt(x, y, str, size, align = "l", cls = "") {
      const e = document.createElement("div");
      e.className = "wf-txt " + cls;
      e.textContent = str;
      const tx = align === "c" ? "translateX(-50%)" : align === "r" ? "translateX(-100%)" : "none";
      e.style.cssText = `left:${X(x)}px;top:${Y(y) - size / 2}px;font-size:${size}px;transform:${tx}`;
      board.appendChild(e);
    }
    function pic(x1, y1, x2, y2) {
      const e = document.createElementNS("http://www.w3.org/2000/svg", "svg");
      e.setAttribute("viewBox", "0 0 40 30");
      e.setAttribute("preserveAspectRatio", "none");
      e.style.cssText = `left:${X(x1)}px;top:${Y(y1)}px;width:${(x2 - x1) / 3}px;height:${(y2 - y1) / 3}px`;
      e.innerHTML = '<rect x="1" y="1" width="38" height="28" fill="#f2f8fe" stroke="#d3e5f4" stroke-width="2"/><path d="M2 26 13 13l8 8 6-6 11 11z" fill="#d7e8f6"/>';
      board.appendChild(e);
    }
    function ribbon(x, y, len, dir) {
      const e = box(x, y, x + len, y + 6, "wf-blue");
      e.style.transform = `rotate(${dir}deg)`;
    }
    const dots3 = (x, y, step = 11) => { dot(x, y, 2.500); dot(x + step, y, 2.500); dot(x + 2 * step, y, 2.500); };

    // 01_Navigation Bar
    addBoard("01_Navigation Bar", 406, 523, 515, 761);
    at(400, 500);
    box(18, 70, 345, 103, "wf-blue");
    txt(25, 91, "Navigation", 3.400, "l", "wf-w");
    ln(25, 75, 45, "wf-white");
    ln(32, 123, 75); ln(290, 123, 335);
    box(18, 143, 345, 148, "wf-blue");
    [157, 219, 297, 345, 380, 457].forEach(y => { ln(30, y, 62); ln(120, y, 230); ln(285, y, 330, "wf-soft"); });
    dot(310, 157, 2); dot(325, 157, 2);
    [182, 233].forEach(y => { ln(35, y, 70); ln(165, y, 200, "wf-mid"); lines(40, y + 12, 60, 1, 0); ln(80, y + 12, 330); });
    btn(312, 178, 335, 186);
    dot(310, 219, 2); dot(325, 219, 2);
    ln(30, 256, 70); ln(280, 256, 330);
    box(18, 264, 345, 276, "wf-blue");
    box(18, 264, 80, 276, "wf-dark");
    box(113, 266, 255, 274, "wf-pale");
    dot(243, 297); dot(310, 297, 2); dot(325, 297, 2);
    ln(30, 310, 240); ln(300, 310, 330);
    box(18, 328, 345, 335, "wf-blue");
    dot(330, 345);
    ln(30, 368, 120); ln(280, 368, 330);
    dot(243, 380);
    box(18, 390, 345, 399, "wf-blue");
    box(18, 411, 345, 420, "wf-blue");
    dot(57, 415, 4, "wf-white wf-round");
    [70, 114, 158, 203, 247, 291].forEach(x => { dot(x, 430, 2, "wf-mid wf-round"); });
    ln(25, 440, 335);
    dot(323, 457);
    ln(30, 483, 330);
    btn(107, 504, 133, 512); btn(228, 504, 254, 512);
    box(18, 520, 345, 783, "wf-pale");
    box(30, 527, 90, 541, "wf-dark");
    box(103, 527, 117, 541, "wf-dark");
    box(30, 543, 90, 765, "wf-white");
    box(103, 543, 118, 765, "wf-white");
    for (let i = 0; i < 8; i++) { const y = 550 + i * 14.500; dot(38, y, 2, "wf-mid wf-round"); ln(46, y, 70); dot(110, y, 2, "wf-mid wf-round"); }
    box(130, 527, 340, 545, "wf-white"); box(130, 552, 340, 570, "wf-white");
    ln(290, 535, 325, "wf-soft"); ln(270, 560, 330, "wf-soft");

    // 02_Dropdown Menus
    addBoard("02_Dropdown Menus", 537.300, 523, 646, 735);
    box(412, 70, 739, 103, "wf-blue");
    txt(420, 91, "Dropdown Menus", 3.400, "l", "wf-w");
    [450, 517, 583, 650].forEach(x => { ln(x, 133, x + 28, "wf-mid"); lines(x, 145, x + 20, 5, 11.500); });
    ln(412, 216, 739, "wf-soft");
    [[450, 500], [518, 566], [583, 632], [648, 697]].forEach(([a, b]) => { box(a, 238, b, 288); ln(a + 10, 297, b - 10); });
    box(412, 320, 739, 705, "wf-pale2");
    box(438, 333, 586, 418, "wf-white");
    box(446, 342, 515, 408);
    lines(522, 349, 540, 6, 10.500);
    box(655, 333, 712, 382, "wf-white");
    dot(684, 345, 4); box(678, 350, 690, 358, "wf-blue");
    ln(672, 370, 695);
    box(655, 392, 712, 425, "wf-white");
    lines(660, 376, 680, 4, 11);
    box(438, 433, 500, 497, "wf-white"); box(505, 433, 560, 497, "wf-white");
    box(438, 510, 500, 580, "wf-white"); box(505, 510, 565, 580, "wf-white");
    [440, 513].forEach(x => { lines(x + 2, 440, x + 22, 5, 11.500); lines(x + 2, 520, x + 22, 5, 12); });
    lines(568, 438, 588, 4, 12);
    box(657, 440, 722, 545, "wf-white"); box(657, 560, 722, 675, "wf-white");
    [445, 467, 490, 512, 565, 588, 610, 632].forEach(y => { box(660, y, 672, y + 12); ln(675, y + 3, 705, "wf-line"); ln(675, y + 9, 695); });
    ln(675, 536, 695); ln(675, 655, 705); ln(680, 666, 698);

    // 03_Value Proposition
    addBoard("03_Value Proposition", 668.700, 524, 777.700, 1046.700);
    box(806, 73, 1133, 228);
    ln(840, 105, 890); txt(840, 120, "Summer", 6.800); txt(840, 142, "Collection", 6.800); txt(840, 164, "Sales", 6.800);
    btn(840, 187, 878, 197); pic(950, 135, 990, 165);
    box(806, 240, 1133, 425);
    ln(1020, 318, 1098); txt(1098, 333, "Summer", 6.800, "r"); txt(1098, 354, "Collection", 6.800, "r"); txt(1098, 376, "Sales", 6.800, "r");
    pic(950, 315, 990, 345); ln(1072, 402, 1092);
    box(806, 432, 1133, 615);
    ln(945, 499, 995); txt(970, 517, "Best Selling", 6.500, "c"); txt(970, 538, "Product Collections", 6.500, "c");
    box(806, 625, 1133, 780);
    ln(840, 665, 890); txt(840, 677, "Summer", 3.900); txt(840, 690, "Collection", 3.900); txt(840, 703, "Sales", 3.900);
    ln(840, 720, 860, "wf-mid"); btn(840, 731, 878, 741); pic(950, 688, 990, 718); ln(950, 770, 990);
    box(806, 790, 1133, 948);
    pic(950, 853, 990, 883);
    txt(1100, 845, "Best Selling", 3.900, "r"); txt(1100, 859, "Product Collections", 3.900, "r");
    ln(973, 838, 1100, "wf-mid");
    ln(1040, 902, 1060, "wf-line"); btn(1062, 897, 1100, 908);
    [973, 1036, 1100].forEach(x => { [838, 865].forEach(y => { const s = 6; const e = box(x - s, y - s, x + s, y + s, "wf-grip"); }); });
    ln(840, 938, 855); ln(960, 938, 972); ln(1090, 938, 1105);
    box(806, 958, 1133, 1117);
    txt(970, 992, "xPhone SE", 3.700, "c"); ln(935, 1005, 1005); ln(945, 1013, 995); pic(950, 1033, 990, 1053);
    at(400, 850);
    box(806, 75, 1133, 232);
    box(885, 113, 895, 120, "wf-blue"); ln(885, 124, 920); txt(885, 134, "xMac Pro", 3.700); lines(885, 145, 950, 2, 8); pic(950, 138, 990, 170);
    btn(885, 170, 922, 180); ln(885, 190, 905);
    box(806, 242, 1133, 398);
    box(965, 260, 975, 267, "wf-blue"); txt(970, 276, "xPhone SE", 3.700, "c"); ln(935, 288, 1005);
    pic(950, 300, 990, 335); btn(950, 316, 988, 327);
    box(822, 423, 1118, 578);
    ln(945, 477, 995, "wf-mid"); txt(970, 494, "Best Selling", 6.500, "c"); txt(970, 515, "Product Collections", 6.500, "c");

    // 04_Product Description
    addBoard("04_Product Description", 800, 524, 909, 822.700);
    at(650, 500);
    function prodRight(yTitle, title, yBtn, yDots) {
      if (title) txt(640, yTitle, title, 3.700);
      lines(640, yTitle + 20, 738, 4, 6);
      yDots.forEach(y => { dot(653, y, 2.500); dot(665, y, 2.500, "wf-mid wf-round"); ln(640, y - 8, 655); });
      btn(640, yBtn, 677, yBtn + 10); ln(685, yBtn + 4, 725);
    }
    ln(486, 82, 560); txt(486, 98, "Slim Laptop 2-in-1", 3.500); ln(486, 108, 505, "wf-mid");
    dot(710, 97, 1.500, "wf-mid wf-round"); dot(722, 97, 1.500, "wf-mid wf-round"); dot(737, 97, 1.500, "wf-mid wf-round");
    box(486, 125, 610, 242); pic(535, 172, 560, 192);
    ln(640, 126, 680); lines(640, 137, 740, 3, 6); dot(653, 175, 2.500); dot(663, 195, 2.500); dot(672, 195, 2.500, "wf-dark wf-round"); ln(640, 208, 655);
    btn(640, 232, 677, 242); ln(685, 236, 725);
    ln(486, 281, 560);
    box(486, 292, 500, 425); box(507, 292, 610, 425); pic(545, 345, 572, 370);
    prodRight(310, "Slim Laptop", 415, [371]); dot(676, 387, 2.500, "wf-dark wf-round"); dot(685, 387, 2.500);
    ln(486, 464, 560);
    box(486, 475, 610, 585); pic(536, 515, 560, 530);
    prodRight(480, "Slim Laptop", 575, [556]); dot(702, 556, 2.500, "wf-dark wf-round"); dot(712, 556, 2.500);
    ln(486, 623, 560);
    box(486, 633, 610, 770); pic(533, 690, 560, 712); dot(603, 640, 2); 
    prodRight(652, "Slim Laptop", 758, [705]); dot(676, 722, 2.500, "wf-dark wf-round"); dot(685, 722, 2.500);
    ln(486, 807, 560);
    box(486, 817, 610, 952); pic(533, 872, 560, 895); dot(603, 823, 2); box(640, 820, 660, 825, "wf-blue");
    prodRight(835, "Slim Laptop", 942, []); ln(640, 889, 650); ln(640, 905, 650);
    dot(468, 865, 2); dot(468, 884, 2); dot(468, 903, 2);

    // 13_Loging & Signup
    addBoard("13_Loging & Signup", 800, 847, 909, 991);
    at(400, 850);
    box(1202, 0, 1528, 197, "wf-pale2"); box(1202, 212, 1528, 424, "wf-pale2");
    ln(1217, 3, 1250, "wf-mid"); ln(1217, 226, 1250, "wf-mid");
    ln(1348, 45, 1382, "wf-mid"); ln(1342, 63, 1350); ln(1380, 63, 1390); ln(1323, 70, 1362);
    box(1323, 81, 1405, 90, "wf-white"); box(1323, 98, 1405, 107, "wf-white"); dot(1328, 85, 1.200); dot(1328, 102, 1.200); ln(1323, 112, 1348);
    btn(1323, 122, 1405, 132); btn(1323, 140, 1361, 150); btn(1368, 140, 1405, 150);
    ln(1348, 259, 1382, "wf-mid"); ln(1338, 277, 1352); ln(1378, 277, 1392); ln(1362, 284, 1405);
    [296, 312, 329].forEach(y => { box(1323, y, 1405, y + 9, "wf-white"); dot(1328, y + 4, 1.200); });
    btn(1323, 345, 1405, 355); btn(1323, 374, 1361, 384); btn(1368, 374, 1405, 384);

    // 05_Product Details
    addBoard("05_Product Details", 932, 524, 1040, 880);
    at(920, 500);
    const sq = (x, y) => box(x, y - 1, x + 6, y + 5, "wf-mid");
    const title = (x, y, w) => ln(x, y, x + w, "wf-mid");
    title(70, 93, 38); lines(70, 101, 275, 2, 5);
    title(70, 124, 35);
    [[135, 250], [145, 270], [154, 210], [163, 210], [172, 130]].forEach(([y, r]) => { sq(70, y); ln(78, y, r); });
    title(70, 190, 38);
    [[200, 130], [210, 265], [219, 275], [228, 130], [238, 130]].forEach(([y, r]) => { sq(70, y); ln(78, y, r); });
    title(70, 290, 38); lines(70, 297, 275, 2, 6);
    title(70, 321, 25); title(181, 321, 38);
    [332, 341, 350, 359, 368].forEach(y => { ln(72, y, 76); ln(78, y, 130); ln(183, y, 188); ln(190, y, 242); });
    title(70, 422, 38); title(70, 439, 26);
    lines(70, 450, 90, 4, 7); lines(158, 450, 185, 4, 7);
    title(70, 487, 26); lines(70, 498, 95, 8, 8); lines(158, 498, 210, 8, 8);
    title(70, 609, 38); title(70, 626, 26);
    [70, 115, 200, 245].forEach(x => { lines(x, 637, x + 25, 5, 9); lines(x, 716, x + 25, 5, 9); });
    title(70, 705, 26);
    title(70, 805, 38); title(70, 822, 26); box(70, 830, 150, 865); lines(156, 834, 180, 4, 8);
    title(70, 880, 26); box(70, 890, 150, 965); lines(156, 893, 205, 9, 8);
    [100, 143, 185, 228, 270].forEach(x => ln(x, 1024, x + 25)); ln(100, 1030, 128, "wf-mid");
    lines(90, 1048, 115, 9, 9); lines(180, 1048, 210, 9, 9);

    // 14_404
    addBoard("14_404", 932, 904, 1040, 1170);
    at(920, 850);
    txt(198, 220, "404", 13.500, "c", "wf-ink"); txt(198, 249, "Page not found", 3.500, "c", "wf-ink"); ln(143, 261, 253); btn(177, 282, 221, 291);
    txt(91, 395, "Page not found", 3.500); ln(91, 405, 190); ln(91, 412, 190); btn(91, 423, 135, 432); txt(228, 410, "404", 13.500, "l", "wf-ink");
    txt(198, 548, "404", 13.500, "c", "wf-ink"); txt(198, 578, "Page not found", 3.500, "c", "wf-ink"); ln(140, 597, 262); btn(177, 620, 221, 629);
    txt(91, 763, "Page not found", 3.500); ln(91, 773, 190); ln(91, 781, 190); ln(91, 797, 190, "wf-soft"); btn(91, 812, 135, 821); txt(228, 780, "404", 13.500, "l", "wf-ink");

    // 06_Product Grid
    addBoard("06_Product Grid", 1064, 524, 1172, 1170);
    at(920, 500);
    const t4 = [[464, 525], [530, 590], [595, 657], [660, 722]];
    const t6 = [[464, 497], [508, 542], [553, 587], [597, 632], [641, 677], [686, 722]];
    const t3 = [[464, 547], [552, 636], [640, 722]];
    function tiles(list, y1, y2, caps, step = 7) {
      list.forEach(([a, b]) => {
        box(a, y1, b, y2);
        const m = (a + b) / 2;
        box(m - 5, (y1 + y2) / 2 - 4, m + 5, (y1 + y2) / 2 + 4, "wf-line");
        lines(a, y2 + 8, b - 6, caps, step);
        ln(a, y2 + 8 + caps * step + 1, a + 14, "wf-mid");
      });
    }
    const rowHead = (y, short) => { ln(464, y, 508, "wf-mid"); if (!short) ln(700, y, 722); };
    rowHead(93); tiles(t4, 110, 164, 2);
    rowHead(253); tiles(t6, 270, 305, 4);
    rowHead(412); tiles(t3, 428, 483, 2);
    dot(447, 156, 3, "wf-line wf-round"); dot(739, 156, 3, "wf-line wf-round");
    dot(447, 316, 3, "wf-line wf-round"); dot(739, 316, 3, "wf-line wf-round");
    dot(447, 475, 3, "wf-line wf-round"); dot(739, 475, 3, "wf-line wf-round");
    ln(464, 571, 488, "wf-mid");
    [["SUMMER", "OFFERS"], ["50% OFF", "DEALS"], ["SILVER &", "GOLD"]].forEach(([a, b], i) => {
      const [l, r] = t3[i], m = (l + r) / 2;
      box(l, 588, r, 747);
      box(m - 8, 601, m + 8, 606, "wf-blue");
      txt(m, 616, a, 2.800, "c"); txt(m, 626, b, 2.800, "c");
      pic(m - 17, 655, m + 17, 680); ln(m - 7, 733, m + 7, "wf-mid");
    });
    ln(464, 797, 488, "wf-mid");
    box(464, 816, 590, 972); box(595, 816, 722, 972);
    box(468, 827, 482, 832, "wf-blue"); txt(468, 842, "SUMMER", 2.800); txt(468, 852, "OFFERS", 2.800); pic(510, 880, 544, 905); ln(473, 958, 488, "wf-mid");
    box(603, 827, 623, 832, "wf-blue"); txt(603, 842, "50% OFF", 2.800); txt(603, 852, "DEALS", 2.800); pic(640, 880, 675, 905); ln(607, 958, 622, "wf-mid");
    ln(464, 1023, 488, "wf-mid");
    at(920, 850);
    box(464, -10, 722, 148);
    box(470, 1, 482, 6, "wf-blue"); txt(468, 17, "SUMMER", 2.800); txt(468, 27, "OFFERS", 2.800); pic(576, 55, 610, 82); ln(473, 135, 490, "wf-mid");
    rowHead(199); tiles(t4, 220, 268, 2, 6); tiles(t4, 316, 368, 1, 6);
    rowHead(457); tiles(t6, 474, 512, 4); tiles(t6, 566, 604, 4);
    rowHead(698); tiles(t3, 717, 770, 2); tiles(t3, 818, 870, 2);

    // 07_Promo
    addBoard("07_Promo", 1194.700, 524, 1303, 841.700);
    at(920, 500);
    box(824, 73, 1150, 90); btn(1033, 77, 1068, 85); ln(905, 80, 1025); 
    box(824, 100, 1150, 150);
    txt(858, 120, "Great Deals", 3.500); ln(858, 132, 895); pic(967, 110, 1007, 140); btn(1078, 125, 1116, 135);
    ribbon(818, 110, 36, -45);
    const p3 = [[858, 940], [948, 1028], [1036, 1116]];
    p3.forEach(([a, b], i) => {
      box(a, 172, b, 240);
      dot([925, 1015, 1103][i], 186, 7);
      lines(a + 5, 199, a + 22, 3, 8, "wf-mid");
      btn(a + 5, 225, a + 34, 234);
      box(a, 302, b, 395);
      dot([930, 1018, 1106][i], 312, 7);
      pic(a + 28, 340, a + 55, 360);
      lines(a + 6, 400, b - 6, 2, 6);
    });
    txt(987, 286, "Best Trending Laptops", 2.400, "c");
    box(824, 438, 1150, 566);
    [[878, "Jewelry"], [987, "Accessories"], [1096, "Shoes"]].forEach(([x, s]) => {
      dot(x, 474, 7); txt(x, 497, s, 3.200, "c"); ln(x - 30, 508, x + 30); btn(x - 15, 529, x + 15, 538);
    });
    box(858, 588, 1116, 665);
    txt(864, 609, "Save On Unlocked", 2.900); txt(864, 620, "Laptops and Tablets", 2.900); ln(864, 630, 925); btn(864, 641, 893, 650); pic(972, 614, 1004, 640);
    ribbon(1090, 598, 30, 45);
    box(858, 700, 985, 830); box(992, 700, 1116, 830);
    [[921, 983], [1053, 1116]].forEach(([m, r]) => {
      txt(m, 740, "Great Deals", 2.600, "c"); txt(m, 757, "Sales", 6, "c"); ln(m - 12, 772, m + 12); ln(m - 40, 799, m + 40); ln(m - 35, 805, m + 35);
      btn(m - 15, 813, m + 15, 823); ribbon(r - 26, 708, 30, 45);
    });
    box(824, 858, 1150, 878); ln(858, 867, 915); dot(927, 867, 1.500); ln(935, 867, 1020, "wf-white"); btn(1027, 863, 1054, 871); ln(1080, 867, 1110);

    // 09_FAQs
    addBoard("09_FAQs", 1326, 524, 1435, 1143);
    const qa = (x, y) => { sq(x, y); ln(x + 9, y, x + 20); sq(x, y + 8); ln(x + 9, y + 8, x + 20); ln(1297, y, 1388, "wf-mid"); lines(1297, y + 8, 1458, 2, 5); ln(1297, y + 26, 1320); ln(1297, y + 36, 1328); };
    ln(1252, 93, 1305, "wf-mid"); ln(1252, 115, 1462);
    [133, 190, 247, 305].forEach(y => qa(1262, y));
    ln(1370, 375, 1390);
    ln(1252, 430, 1305, "wf-mid"); ln(1258, 456, 1348, "wf-mid"); ln(1258, 472, 1348);
    box(1258, 481, 1500, 497);
    ln(1258, 513, 1290); lines(1258, 529, 1348, 7, 16.300);
    ln(1370, 658, 1390);
    ln(1252, 713, 1305, "wf-mid"); ln(1252, 733, 1440); ln(1450, 733, 1500);
    [760, 832, 904, 975].forEach(y => { ln(1258, y, 1348, "wf-mid"); ln(1258, y + 9, 1300); ln(1258, y + 20, 1280); box(1258, y + 25, 1530, y + 35); ln(1258, y + 50, 1290); ln(1450, y + 50, 1500); });
    ln(1370, 1055, 1390);
    ln(1252, 1110, 1335, "wf-mid"); lines(1258, 1136, 1355, 1, 0); ln(1258, 1145, 1530); ln(1258, 1177, 1355); ln(1258, 1187, 1530);
    at(920, 850);
    ln(1252, 61, 1335, "wf-mid");
    [87, 128, 170, 212, 253].forEach(y => { ln(1258, y, 1355, "wf-mid"); lines(1258, y + 9, 1530, 2, 5); });
    ln(1370, 310, 1390);
    ln(1252, 365, 1335, "wf-mid");
    [1280, 1328, 1370, 1412, 1453].forEach(x => ln(x, 390, x + 30)); ln(1275, 397, 1318, "wf-mid");
    lines(1258, 415, 1348, 9, 18.300);
    ln(1370, 592, 1390);
    ln(1252, 647, 1335, "wf-mid"); ln(1258, 673, 1348);
    box(1258, 682, 1530, 722); ln(1258, 689, 1348, "wf-mid");
    lines(1258, 731, 1348, 7, 16.300);

    // 08_Customer Reviews
    addBoard("08_Customer Reviews", 1195, 865, 1303, 1170);
    at(920, 850);
    ln(858, 64, 908, "wf-mid");
    txt(872, 94, "4.6", 7, "c", "wf-ink");
    box(925, 84, 1020, 104); ln(925, 84, 1000, "wf-blue"); lines(925, 89, 970, 2, 5, "wf-mid"); box(1025, 84, 1048, 104);
    [145, 190, 235, 280].forEach(y => {
      dot(872, y, 15, "wf-ring"); lines(893, y - 7, 912, 3, 7); ln(948, y - 5, 1050, "wf-mid"); lines(948, y + 1, 1050, 2, 6);
    });
    ln(975, 325, 998);
    ln(858, 381, 908, "wf-mid");
    txt(872, 408, "4.6", 7, "c", "wf-ink"); ln(858, 424, 885);
    box(912, 400, 1014, 422); ln(925, 402, 995, "wf-blue"); lines(925, 408, 970, 2, 5, "wf-mid");
    [1051, 1073, 1095].forEach(x => { dot(x, 409, 6, "wf-ring"); ln(x - 4, 408, x, "wf-blue"); });
    [457, 521, 587].forEach(y => { dot(865, y, 8, "wf-ring"); ln(882, y + 1, 905); ln(858, y + 13, 905, "wf-mid"); ln(858, y + 19, 940); lines(858, y + 27, 1065, 2, 6); });
    ln(975, 661, 998);
    ln(858, 716, 908, "wf-mid");
    txt(872, 744, "4.6", 7, "c", "wf-ink");
    box(912, 734, 1010, 760); ln(925, 736, 1000, "wf-blue"); lines(925, 742, 970, 3, 5, "wf-mid");
    box(1042, 734, 1055, 758); box(1072, 734, 1095, 758);
    [791, 848, 905].forEach(y => { ln(858, y, 878, "wf-mid"); ln(858, y + 8, 900); box(905, y + 6, 937, y + 11, "wf-blue"); lines(858, y + 16, 1065, 3, 6); });

    // 11_Slider
    addBoard("11_Slider", 406, 784, 515, 1140);
    at(400, 500);
    dot(181, 880, 6, "wf-ring");
    lines(100, 901, 265, 4, 8);
    ln(168, 982, 195, "wf-mid"); txt(181, 997, "Recent Client Work", 3.500, "c");
    box(73, 1030, 120, 1105, "wf-mid"); box(243, 1030, 288, 1105, "wf-mid");
    box(120, 1022, 243, 1113); pic(168, 1060, 192, 1080);
    ln(120, 1137, 243); ln(145, 1146, 215);
    at(400, 850);
    txt(181, 152, "Recent Client Work", 3.500, "c");
    lines(100, 175, 262, 3, 8); btn(162, 209, 200, 219);
    txt(181, 270, "Article", 2.400, "c"); txt(181, 285, "Recent Client Work", 3.500, "c");
    box(18, 312, 88, 405); box(96, 312, 266, 405); box(274, 312, 345, 405); pic(168, 352, 192, 368);
    [100, 176, 261].forEach(x => dot(x, 418, 2, "wf-line wf-round"));
    box(18, 450, 345, 543);
    txt(73, 475, "Recent Projects", 3.100); lines(73, 486, 160, 3, 5); pic(160, 480, 200, 512); btn(73, 513, 113, 523);
    box(73, 570, 288, 660);
    txt(87, 594, "Recent Projects", 3.100); lines(87, 606, 160, 3, 5); pic(160, 600, 200, 632); btn(87, 632, 127, 642);
    ln(170, 670, 180);
    box(18, 690, 345, 870);
    pic(160, 765, 200, 797); box(120, 797, 243, 855, "wf-white");
    txt(181, 809, "Recent Projects", 2.700, "c"); lines(132, 818, 230, 2, 6); btn(162, 837, 200, 847);

    // 12_Footers
    addBoard("12_Footers", 537.300, 758, 646, 1024);
    at(400, 500);
    ln(447, 792, 480, "wf-mid"); lines(447, 803, 548, 3, 7); box(447, 844, 492, 851, "wf-blue"); ln(492, 847, 502);
    [[578, 598], [623, 640], [668, 690]].forEach(([a, b]) => { ln(a, 803, b, "wf-mid"); lines(a, 820, b, 1, 0); ln(a, 832, b); });
    dots3(670, 844, 9);
    ln(550, 871, 600);
    ln(447, 907, 480, "wf-mid"); [525, 550, 585, 612].forEach(x => ln(x, 907, x + 20)); dots3(682, 907, 9); ln(550, 931, 600);
    ln(447, 966, 480, "wf-mid"); [605, 630, 663, 690].forEach(x => ln(x, 966, x + 18)); ln(447, 988, 498); dots3(682, 988, 9);
    ln(560, 1024, 595, "wf-mid"); [515, 540, 575, 603].forEach(x => ln(x, 1039, x + 18)); ln(550, 1057, 600);
    [447, 490, 533, 578, 622, 665].forEach(x => { ln(x, 1094, x + 25, "wf-mid"); lines(x, 1108, x + 25, 3, 12.500); });
    ln(447, 1172, 480, "wf-mid"); box(547, 1169, 592, 1176, "wf-blue"); ln(592, 1172, 602); dots3(682, 1172, 9);
    at(400, 850);
    [447, 490, 533, 578, 622, 665].forEach(x => lines(x, 57, x + 25, 3, 12.500));
    ln(447, 122, 480, "wf-mid"); box(547, 119, 592, 126, "wf-blue"); ln(592, 122, 602); dots3(682, 122, 9);
    [490, 535, 580, 625].forEach(x => { ln(x, 156, x + 18, "wf-mid"); lines(x, 169, x + 22, 3, 13); });
    dots3(564, 216, 9); ln(550, 237, 600);
    ln(560, 272, 595, "wf-mid"); dots3(564, 294, 9);
    [468, 513, 557, 601, 645].forEach(x => { ln(x, 311, x + 20, "wf-mid"); lines(x, 325, x + 28, 3, 13); });
    ln(445, 373, 530); ln(650, 373, 707);
    ln(560, 408, 595, "wf-mid"); box(516, 422, 636, 437, "wf-soft"); dot(518, 449, 1.500); btn(606, 444, 638, 454);
    dots3(564, 470, 9); ln(445, 491, 530); ln(650, 491, 707); ln(447, 515, 480, "wf-mid"); ln(650, 515, 707);
  </script>
</body>
</html>
